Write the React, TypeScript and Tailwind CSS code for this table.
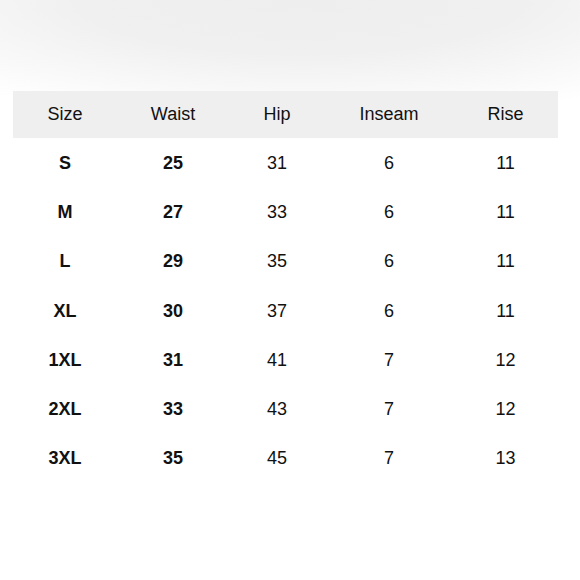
import React from "react";

const rows: [string, string, string, string, string][] = [
  ["S", "25", "31", "6", "11"],
  ["M", "27", "33", "6", "11"],
  ["L", "29", "35", "6", "11"],
  ["XL", "30", "37", "6", "11"],
  ["1XL", "31", "41", "7", "12"],
  ["2XL", "33", "43", "7", "12"],
  ["3XL", "35", "45", "7", "13"],
];

const headers = ["Size", "Waist", "Hip", "Inseam", "Rise"];

export default function App() {
  return (
    <div
      className="w-[580px] h-[580px] overflow-hidden bg-white bg-[radial-gradient(ellipse_85%_120px_at_52%_0px,#eeeeee_0%,#f0f0f0_45%,#f8f8f8_75%,#ffffff_100%)] pt-[91px] pl-[13px] text-[#111111]"
      style={{ fontFamily: '"Liberation Sans", Arial, sans-serif' }}
    >
      <div className="w-[545px]">
        <div className="grid grid-cols-[104px_112px_96px_128px_105px] h-[47px] items-center bg-[#efefef] text-[18px]">
          {headers.map((h) => (
            <div key={h} className="text-center">
              {h}
            </div>
          ))}
        </div>
        <div className="mt-[1px]">
          {rows.map((r) => (
            <div
              key={r[0]}
              className="grid grid-cols-[104px_112px_96px_128px_105px] h-[49.2px] items-center text-[18px]"
            >
              {r.map((c, i) => (
                <div key={i} className={`text-center ${i < 2 ? "font-bold" : ""}`}>
                  {c}
                </div>
              ))}
            </div>
          ))}
        </div>
      </div>
    </div>
  );
}
